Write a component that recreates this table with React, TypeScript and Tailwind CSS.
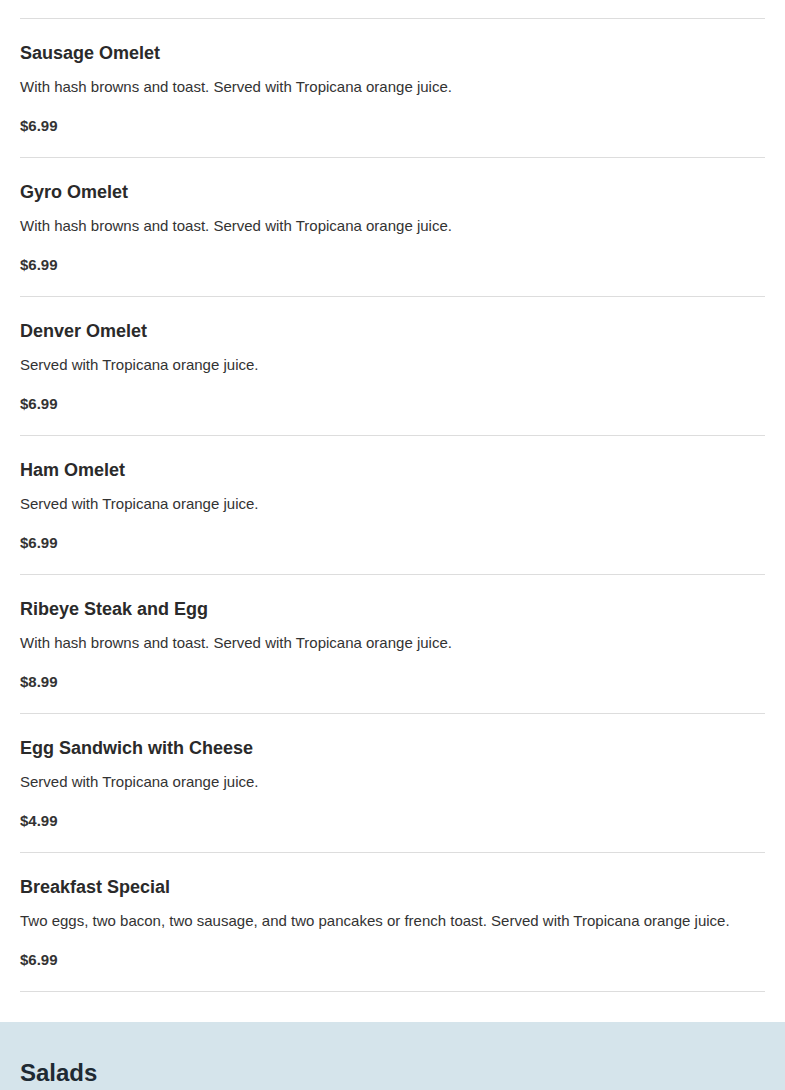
const items = [
  { name: "Sausage Omelet", desc: "With hash browns and toast. Served with Tropicana orange juice.", price: "$6.99" },
  { name: "Gyro Omelet", desc: "With hash browns and toast. Served with Tropicana orange juice.", price: "$6.99" },
  { name: "Denver Omelet", desc: "Served with Tropicana orange juice.", price: "$6.99" },
  { name: "Ham Omelet", desc: "Served with Tropicana orange juice.", price: "$6.99" },
  { name: "Ribeye Steak and Egg", desc: "With hash browns and toast. Served with Tropicana orange juice.", price: "$8.99" },
  { name: "Egg Sandwich with Cheese", desc: "Served with Tropicana orange juice.", price: "$4.99" },
  {
    name: "Breakfast Special",
    desc: "Two eggs, two bacon, two sausage, and two pancakes or french toast. Served with Tropicana orange juice.",
    price: "$6.99",
  },
];

export default function App() {
  return (
    <div className="bg-white font-['Liberation_Sans',Arial,sans-serif] text-[#333]">
      {/* BREAKFAST LIST */}
      <div className="px-5 pb-[30px]">
        <div className="h-[19px] border-b border-[#dddddd]" />
        {items.map((item) => (
          <div key={item.name} className="pt-[23px] pb-[21px] border-b border-[#dddddd]">
            <h3 className="text-[18px] leading-[22px] font-bold text-[#2a2a2a]">{item.name}</h3>
            <p className="mt-[13px] text-[15px] leading-[20px] text-[#333]">{item.desc}</p>
            <p className="mt-[19px] text-[15px] leading-[20px] font-bold text-[#333]">{item.price}</p>
          </div>
        ))}
      </div>

      {/* SALADS */}
      <section className="bg-[#d5e4eb] px-5 pt-[37px] pb-10">
        <h2 className="text-[24px] leading-[28px] font-bold text-[#1f2a33]">Salads</h2>
      </section>
    </div>
  );
}
